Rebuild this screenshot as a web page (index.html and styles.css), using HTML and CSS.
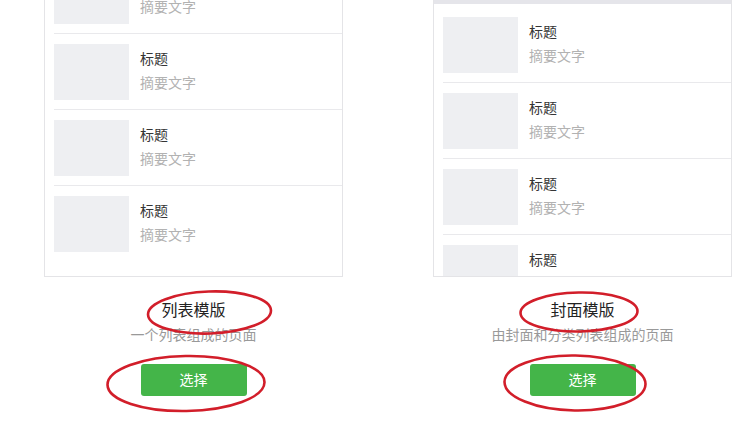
FILE: index.html
```html
<!DOCTYPE html>
<html lang="zh-CN">
<head>
<meta charset="utf-8">
<title>模版选择</title>
<link rel="stylesheet" href="styles.css">
</head>
<body>
<div class="page">
  <div class="templates">
    <section class="tpl">
      <div class="card card-list">
        <ul class="items">
          <li class="item"><div class="thumb"></div><div class="meta"><div class="t">标题</div><div class="s">摘要文字</div></div></li>
          <li class="item"><div class="thumb"></div><div class="meta"><div class="t">标题</div><div class="s">摘要文字</div></div></li>
          <li class="item"><div class="thumb"></div><div class="meta"><div class="t">标题</div><div class="s">摘要文字</div></div></li>
          <li class="item"><div class="thumb"></div><div class="meta"><div class="t">标题</div><div class="s">摘要文字</div></div></li>
        </ul>
      </div>
      <h3 class="name">列表模版</h3>
      <p class="desc">一个列表组成的页面</p>
      <button class="btn">选择</button>
    </section>
    <section class="tpl">
      <div class="card card-cover">
        <div class="cover"></div>
        <ul class="items">
          <li class="item"><div class="thumb"></div><div class="meta"><div class="t">标题</div><div class="s">摘要文字</div></div></li>
          <li class="item"><div class="thumb"></div><div class="meta"><div class="t">标题</div><div class="s">摘要文字</div></div></li>
          <li class="item"><div class="thumb"></div><div class="meta"><div class="t">标题</div><div class="s">摘要文字</div></div></li>
          <li class="item"><div class="thumb"></div><div class="meta"><div class="t">标题</div><div class="s">摘要文字</div></div></li>
        </ul>
      </div>
      <h3 class="name">封面模版</h3>
      <p class="desc">由封面和分类列表组成的页面</p>
      <button class="btn">选择</button>
    </section>
  </div>
  <svg class="marks" width="749" height="429" viewBox="0 0 749 429" aria-hidden="true">
    <ellipse cx="209.5" cy="312.5" rx="61.5" ry="21" transform="rotate(-2 209.5 312.5)"/>
    <ellipse cx="186" cy="383.5" rx="78.5" ry="27.5" transform="rotate(-1 186 383.5)"/>
    <ellipse cx="579" cy="312" rx="58.5" ry="19.5" transform="rotate(-1 579 312)"/>
    <ellipse cx="575" cy="383" rx="70.5" ry="27.5" transform="rotate(1 575 383)"/>
  </svg>
</div>
</body>
</html>
```
FILE: styles.css
```css
* { box-sizing: border-box; }
html, body { margin: 0; padding: 0; background: #fff; }
body {
  font-family: "Liberation Sans", "Noto Sans CJK SC", sans-serif;
  color: #353535;
  width: 749px;
  height: 429px;
  overflow: hidden;
}
.page { position: relative; width: 749px; height: 429px; }
.templates {
  display: flex;
  gap: 90px;
  padding-left: 44px;
}
.tpl {
  width: 299px;
  display: flex;
  flex-direction: column;
  align-items: center;
}
.card {
  width: 299px;
  height: 277px;
  border: 1px solid #e4e4e7;
  border-top: 0;
  overflow: hidden;
  display: flex;
  flex-direction: column;
}
.card-list { justify-content: flex-end; padding-bottom: 15px; }
.card-cover { justify-content: flex-start; }
.cover { height: 4px; flex: none; background: #e5e5ea; }
.items { list-style: none; margin: 0; padding: 0; flex: none; }
.card-cover .items { padding-top: 3px; }
.item {
  display: flex;
  margin-left: 9px;
  padding: 10px 0 9px;
  border-bottom: 1px solid #e9e9ec;
}
.item:last-child { border-bottom: 0; }
.card-cover .item:last-child { border-bottom: 1px solid #e9e9ec; }
.thumb { width: 75px; height: 56px; background: #eeeff2; flex: none; }
.meta {
  margin-left: 11px;
  padding-top: 3px;
  font-size: 14px;
  line-height: 24px;
}
.t { color: #353535; }
.s { color: #b2b2b2; }
.name {
  margin: 22px 0 0;
  font-size: 16px;
  font-weight: normal;
  line-height: 24px;
  color: #222;
}
.desc {
  margin: 0;
  font-size: 14px;
  line-height: 24px;
  color: #999;
}
.btn {
  margin-top: 17px;
  width: 106px;
  height: 32px;
  border: 0;
  border-radius: 3px;
  background: #44b549;
  color: #fff;
  font-family: inherit;
  font-size: 14px;
  line-height: 32px;
  padding: 0;
}
.marks {
  position: absolute;
  left: 0;
  top: 0;
  pointer-events: none;
}
.marks ellipse {
  fill: none;
  stroke: #d21e2a;
  stroke-width: 2.6;
}
```
